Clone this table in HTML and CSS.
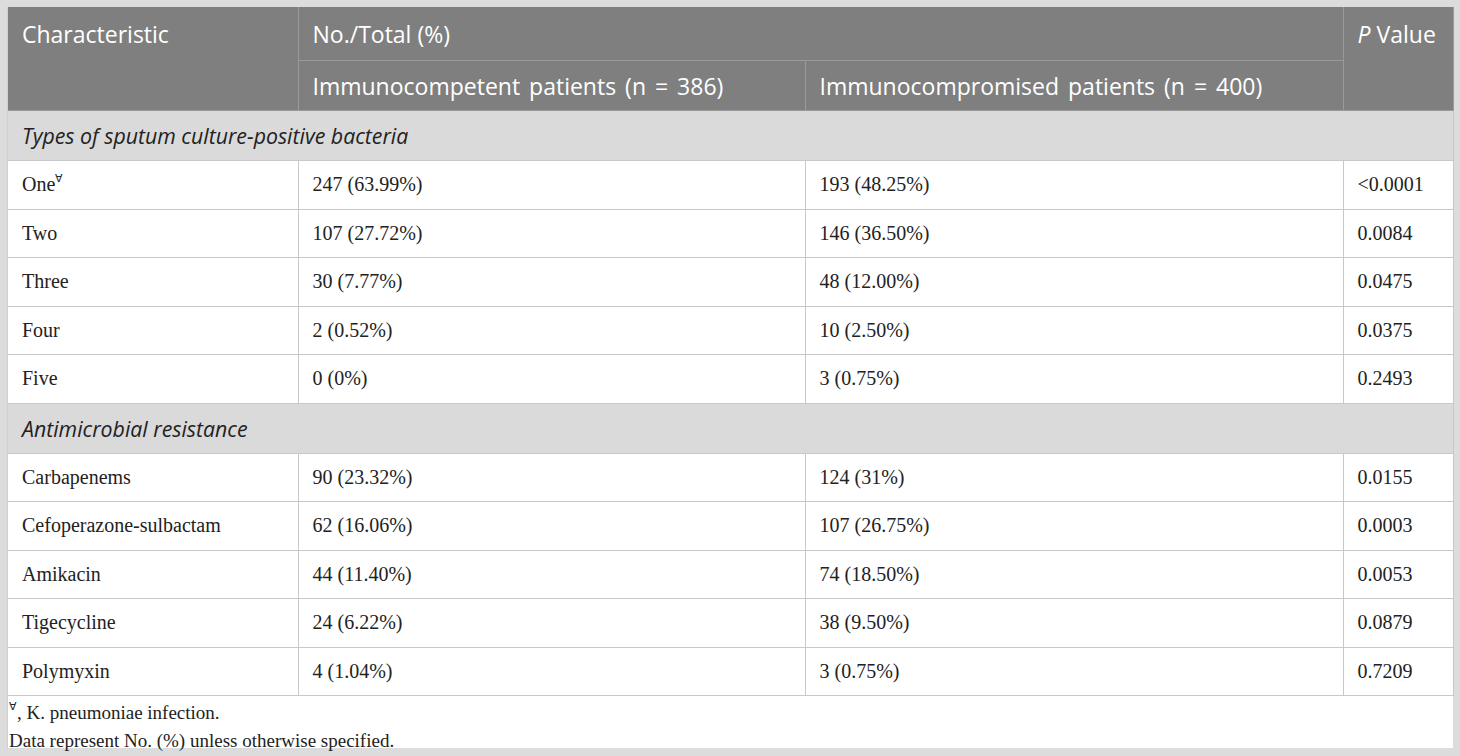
FILE: index.html
```html
<!DOCTYPE html>
<html lang="en">
<head>
    <meta charset="UTF-8">
    <meta name="viewport" content="width=device-width, initial-scale=1.0">
    <title>Sputum culture results</title>
    <link rel="stylesheet" href="styles.css">
</head>
<body>
    <div class="sheet">
        <table class="results">
            <colgroup>
                <col class="c-name">
                <col class="c-comp">
                <col class="c-immuno">
                <col class="c-p">
            </colgroup>
            <thead>
                <tr class="head-top">
                    <th rowspan="2">Characteristic</th>
                    <th colspan="2">No./Total (%)</th>
                    <th rowspan="2" class="p-col"><i>P</i> Value</th>
                </tr>
                <tr class="head-sub">
                    <th>Immunocompetent patients (n = 386)</th>
                    <th>Immunocompromised patients (n = 400)</th>
                </tr>
            </thead>
            <tbody>
                <tr class="section"><td colspan="4">Types of sputum culture-positive bacteria</td></tr>
                <tr><td>One<sup>&#8704;</sup></td><td>247 (63.99%)</td><td>193 (48.25%)</td><td>&lt;0.0001</td></tr>
                <tr><td>Two</td><td>107 (27.72%)</td><td>146 (36.50%)</td><td>0.0084</td></tr>
                <tr><td>Three</td><td>30 (7.77%)</td><td>48 (12.00%)</td><td>0.0475</td></tr>
                <tr><td>Four</td><td>2 (0.52%)</td><td>10 (2.50%)</td><td>0.0375</td></tr>
                <tr><td>Five</td><td>0 (0%)</td><td>3 (0.75%)</td><td>0.2493</td></tr>
                <tr class="section"><td colspan="4">Antimicrobial resistance</td></tr>
                <tr><td>Carbapenems</td><td>90 (23.32%)</td><td>124 (31%)</td><td>0.0155</td></tr>
                <tr><td>Cefoperazone-sulbactam</td><td>62 (16.06%)</td><td>107 (26.75%)</td><td>0.0003</td></tr>
                <tr><td>Amikacin</td><td>44 (11.40%)</td><td>74 (18.50%)</td><td>0.0053</td></tr>
                <tr><td>Tigecycline</td><td>24 (6.22%)</td><td>38 (9.50%)</td><td>0.0879</td></tr>
                <tr><td>Polymyxin</td><td>4 (1.04%)</td><td>3 (0.75%)</td><td>0.7209</td></tr>
            </tbody>
        </table>
        <div class="notes">
            <p><sup>&#8704;</sup>, K. pneumoniae infection.</p>
            <p>Data represent No. (%) unless otherwise specified.</p>
        </div>
    </div>
</body>
</html>
```

FILE: styles.css
```css
body {
    margin: 0;
    background-color: #dcdcdc;
}

.sheet {
    margin: 7px;
    width: 1446px;
    height: 741px;
    background-color: #fff;
    border-left: 1px solid #cfcfcf;
    box-sizing: border-box;
}

.results {
    width: 1445px;
    border-collapse: collapse;
    table-layout: fixed;
    font-family: "Liberation Serif", "Times New Roman", serif;
    font-size: 20px;
    color: #222;
}

.c-name { width: 290px; }
.c-comp { width: 507px; }
.c-immuno { width: 538px; }
.c-p { width: 110px; }

.results th {
    background-color: #7f7f7f;
    color: #fff;
    font-family: "Open Sans", "Noto Sans", sans-serif;
    font-weight: normal;
    font-size: 23px;
    text-align: left;
    vertical-align: top;
    padding: 11px 14px 0;
    border: 1px solid #9a9a9a;
    border-top: none;
    white-space: nowrap;
}

.results th.p-col {
    padding-right: 0;
}

.head-top th {
    height: 42px;
}

.head-sub th {
    height: 40px;
    padding-top: 9px;
    word-spacing: 3px;
}

.results th:first-child {
    border-left: none;
}

.results td {
    height: 47.5px;
    padding: 0 14px;
    border: 1px solid #c8c8c8;
    vertical-align: middle;
}

.results td:first-child {
    border-left: none;
}

.section td {
    background-color: #dadada;
    font-family: "Open Sans", "Noto Sans", sans-serif;
    font-style: italic;
    font-size: 21.3px;
    height: 49px;
    padding-top: 0;
}

sup {
    font-size: 11px;
    vertical-align: 9px;
    line-height: 0;
}

.notes {
    font-family: "Liberation Serif", "Times New Roman", serif;
    font-size: 19px;
    color: #222;
    padding: 4px 0 0 1px;
}

.notes p {
    margin: 0 0 2px;
    line-height: 26px;
}
```
